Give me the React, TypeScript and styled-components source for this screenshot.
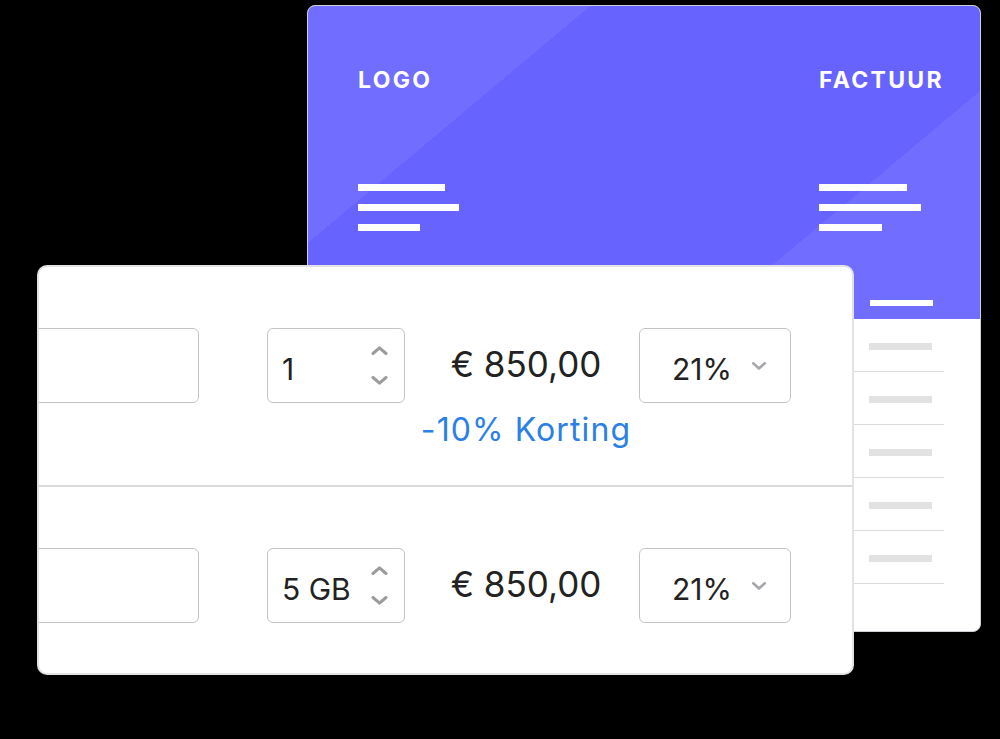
import React from "react";
import styled, { createGlobalStyle } from "styled-components";

const GlobalStyle = createGlobalStyle`
  html, body { margin: 0; padding: 0; background: #000; }
  body { font-family: Inter, "Liberation Sans", sans-serif; }
  *, *::before, *::after { box-sizing: border-box; }
`;

const Stage = styled.div`
  position: relative;
  width: 1000px;
  height: 739px;
  overflow: hidden;
  background: #000;
  padding: 5px 0 0 307px;
`;

/* ---------- back card: invoice preview ---------- */

const InvoiceCard = styled.div`
  width: 674px;
  height: 627px;
  background: #fff;
  border: 1px solid #cfcfd6;
  border-radius: 8px;
  overflow: hidden;
  display: flex;
  flex-direction: column;
`;

const InvoiceHeader = styled.div`
  flex: none;
  height: 313px;
  padding: 63px 37px 13px 50px;
  display: flex;
  flex-direction: column;
  color: #fff;
  background: linear-gradient(
    140deg,
    #716dff 0%,
    #716dff 27%,
    #6763ff 27%,
    #6763ff 74%,
    #716dff 74%,
    #716dff 100%
  );
`;

const HeaderColumns = styled.div`
  display: flex;
  justify-content: space-between;
`;

const HeaderBlock = styled.div<{ $width?: number }>`
  display: flex;
  flex-direction: column;
  width: ${(p) => (p.$width ? `${p.$width}px` : "auto")};
`;

const HeaderTitle = styled.div`
  font-family: Inter, "Liberation Sans", sans-serif;
  font-weight: 700;
  font-size: 23px;
  line-height: 23px;
  letter-spacing: 2.3px;
  white-space: nowrap;
`;

const TextLines = styled.div`
  display: flex;
  flex-direction: column;
  gap: 13px;
  margin-top: 92px;
`;

const Bar = styled.div<{ $w: number; $h?: number; $color?: string }>`
  width: ${(p) => p.$w}px;
  height: ${(p) => p.$h ?? 7}px;
  background: ${(p) => p.$color ?? "#fff"};
`;

const HeadRow = styled.div`
  margin-top: auto;
  display: flex;
  justify-content: flex-end;
  padding-right: 10px;
`;

const InvoiceTable = styled.div`
  padding: 0 36px 0 50px;
  display: flex;
  flex-direction: column;
`;

const InvoiceRow = styled.div`
  height: 53px;
  border-bottom: 1px solid #dcdcdc;
  display: flex;
  align-items: center;
  justify-content: flex-end;
  padding: 2px 12px 0 0;
`;

/* ---------- front card: line editor ---------- */

const EditorCard = styled.div`
  position: absolute;
  left: 37px;
  top: 265px;
  width: 817px;
  height: 410px;
  background: #fff;
  border: 2px solid #e2e2e4;
  border-radius: 10px;
  overflow: hidden;
`;

const LineRow = styled.div<{ $last?: boolean }>`
  display: flex;
  align-items: flex-start;
  padding: 61px 0 ${(p) => (p.$last ? 0 : 37)}px;
  border-bottom: ${(p) => (p.$last ? "none" : "2px solid #dadada")};
`;

const Field = styled.div`
  flex: none;
  height: 75px;
  border: 1.5px solid #c4c4c6;
  border-radius: 6px;
  background: #fff;
`;

const DescriptionField = styled(Field)`
  width: 240px;
  margin-left: -80px;
`;

const Stepper = styled(Field)`
  width: 138px;
  margin-left: 68px;
  display: flex;
  align-items: center;
  justify-content: space-between;
  padding: 0 16px 0 14px;
`;

const FieldValue = styled.span`
  font-size: 30px;
  color: #222;
  padding-top: 6px;
  white-space: nowrap;
`;

const Arrows = styled.div`
  display: flex;
  flex-direction: column;
  gap: 21px;
`;

const PriceCell = styled.div`
  flex: none;
  width: 234px;
  display: flex;
  flex-direction: column;
  align-items: center;
  padding-left: 8px;
`;

const Price = styled.div`
  height: 75px;
  display: flex;
  align-items: center;
  font-size: 35px;
  color: #222;
  padding-bottom: 4px;
  white-space: nowrap;
`;

const Discount = styled.div`
  margin-top: 9px;
  font-size: 32px;
  line-height: 36px;
  letter-spacing: 1.1px;
  color: #2b80e6;
  white-space: nowrap;
`;

const VatSelect = styled(Field)`
  width: 152px;
  display: flex;
  align-items: center;
  justify-content: space-between;
  padding: 0 23px 0 32px;
`;

const Chevron = ({ up, color, w = 17, h = 9 }: { up?: boolean; color: string; w?: number; h?: number }) => (
  <svg width={w} height={h} viewBox="0 0 17 9" fill="none" style={{ display: "block" }}>
    <path
      d={up ? "M2 7.5 L8.5 1.8 L15 7.5" : "M2 1.5 L8.5 7.2 L15 1.5"}
      stroke={color}
      strokeWidth={3}
      strokeLinecap="round"
      strokeLinejoin="round"
    />
  </svg>
);

type Line = { qty: string; price: string; vat: string; discount?: string };

const lines: Line[] = [
  { qty: "1", price: "€ 850,00", vat: "21%", discount: "-10% Korting" },
  { qty: "5 GB", price: "€ 850,00", vat: "21%" },
];

export default function App() {
  return (
    <>
      <GlobalStyle />
      <Stage>
        <InvoiceCard>
          <InvoiceHeader>
            <HeaderColumns>
              <HeaderBlock>
                <HeaderTitle>LOGO</HeaderTitle>
                <TextLines>
                  <Bar $w={87} />
                  <Bar $w={101} />
                  <Bar $w={62} />
                </TextLines>
              </HeaderBlock>
              <HeaderBlock $width={124}>
                <HeaderTitle>FACTUUR</HeaderTitle>
                <TextLines>
                  <Bar $w={88} />
                  <Bar $w={102} />
                  <Bar $w={63} />
                </TextLines>
              </HeaderBlock>
            </HeaderColumns>
            <HeadRow>
              <Bar $w={63} $h={6} />
            </HeadRow>
          </InvoiceHeader>
          <InvoiceTable>
            {[0, 1, 2, 3, 4].map((i) => (
              <InvoiceRow key={i}>
                <Bar $w={63} $color="#e2e2e2" />
              </InvoiceRow>
            ))}
          </InvoiceTable>
        </InvoiceCard>

        <EditorCard>
          {lines.map((l, i) => (
            <LineRow key={i} $last={i === lines.length - 1}>
              <DescriptionField />
              <Stepper>
                <FieldValue>{l.qty}</FieldValue>
                <Arrows>
                  <Chevron up color="#9c9c9e" />
                  <Chevron color="#9c9c9e" />
                </Arrows>
              </Stepper>
              <PriceCell>
                <Price>{l.price}</Price>
                {l.discount && <Discount>{l.discount}</Discount>}
              </PriceCell>
              <VatSelect>
                <FieldValue>{l.vat}</FieldValue>
                <Chevron color="#a8a8ac" w={16} h={8} />
              </VatSelect>
            </LineRow>
          ))}
        </EditorCard>
      </Stage>
    </>
  );
}
